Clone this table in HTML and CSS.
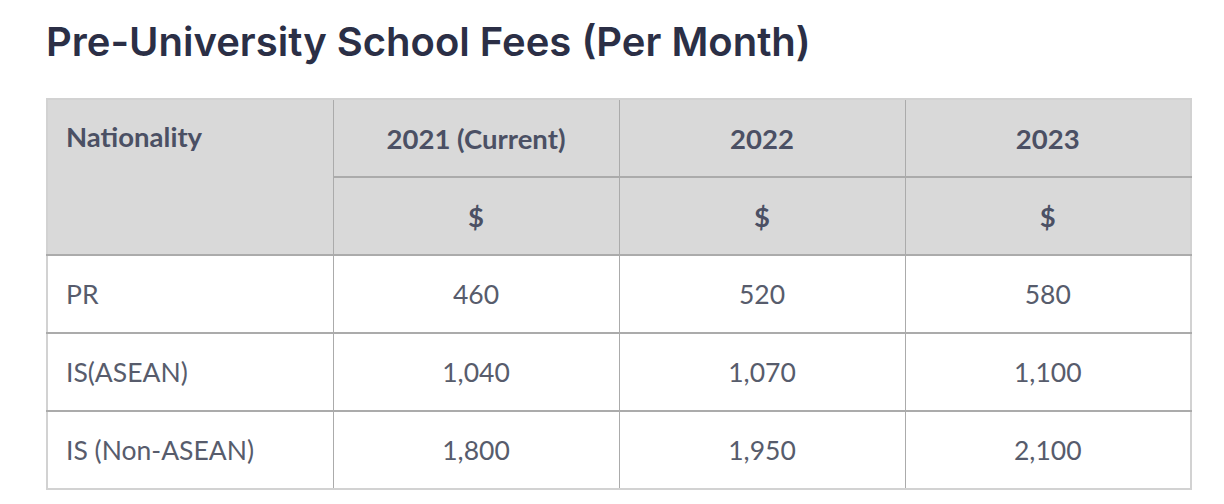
FILE: index.html
```html
<!DOCTYPE html>
<html lang="en">
<head>
<meta charset="utf-8">
<title>Pre-University School Fees</title>
<link rel="stylesheet" href="styles.css">
</head>
<body>
<main class="page">
  <h2 class="title">Pre-University School Fees (Per Month)</h2>
  <table class="fees">
    <thead>
      <tr>
        <th class="nat" rowspan="2">Nationality</th>
        <th>2021 (Current)</th>
        <th>2022</th>
        <th>2023</th>
      </tr>
      <tr>
        <th>$</th>
        <th>$</th>
        <th>$</th>
      </tr>
    </thead>
    <tbody>
      <tr><td class="label">PR</td><td>460</td><td>520</td><td>580</td></tr>
      <tr><td class="label">IS(ASEAN)</td><td>1,040</td><td>1,070</td><td>1,100</td></tr>
      <tr><td class="label">IS (Non-ASEAN)</td><td>1,800</td><td>1,950</td><td>2,100</td></tr>
    </tbody>
  </table>
</main>
</body>
</html>
```
FILE: styles.css
```css
html, body {
  margin: 0;
  padding: 0;
  background: #ffffff;
}
.page {
  padding: 18px 32px 0 46px;
}
.title {
  margin: 0 0 32px 0;
  font-family: Inter, "Open Sans", sans-serif;
  font-weight: 600;
  font-size: 40px;
  line-height: 48px;
  color: #2b2f46;
  letter-spacing: 0;
}
.fees {
  width: 100%;
  border-collapse: collapse;
  border: 2px solid #d2d2d2;
  font-family: Lato, "Open Sans", sans-serif;
  font-size: 26.5px;
  table-layout: fixed;
}
.fees th, .fees td {
  height: 76px;
  padding: 0 18px;
  border-left: 1px solid #ababab;
  border-right: 1px solid #ababab;
  border-top: 2px solid #ababab;
  border-bottom: 2px solid #ababab;
  text-align: center;
  vertical-align: middle;
}
.fees thead tr:first-child th {
  border-top: 2px solid #d2d2d2;
}
.fees tbody tr:last-child td {
  border-bottom: 2px solid #d2d2d2;
}
.fees th:first-child, .fees td:first-child {
  border-left: 2px solid #d2d2d2;
}
.fees thead tr:first-child th:last-child,
.fees thead tr:nth-child(2) th:last-child,
.fees td:last-child {
  border-right: 2px solid #d2d2d2;
}
.fees thead tr:nth-child(2) th:first-child {
  border-left: 1px solid #ababab;
}
.fees th {
  background: #d9d9d9;
  color: #4b5064;
  font-weight: 700;
  font-size: 27.5px;
}
.fees td {
  color: #575c6c;
  font-weight: 400;
}
.fees .nat {
  text-align: left;
  vertical-align: top;
  padding-top: 20px;
  height: auto;
}
.fees .label {
  text-align: left;
}
```
